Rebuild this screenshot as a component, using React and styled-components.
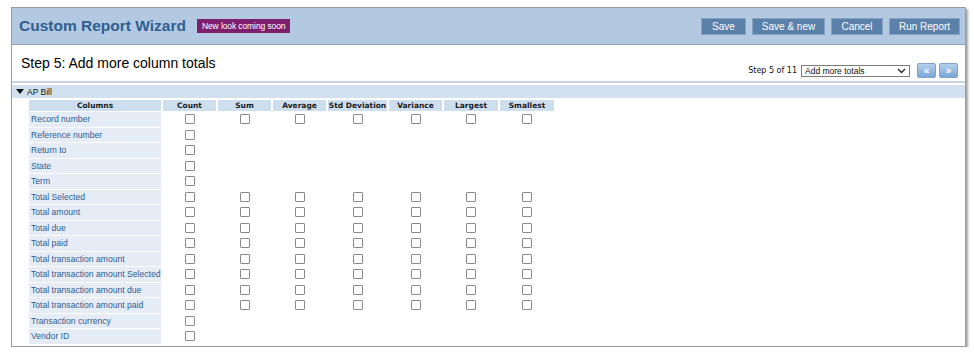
import React from 'react'
import styled, { createGlobalStyle } from 'styled-components'

const GlobalStyle = createGlobalStyle`
body{
    margin:0;
    background:#fff;
    font-family:"Liberation Sans", Arial, sans-serif;
}
`

const totals = ['Count', 'Sum', 'Average', 'Std Deviation', 'Variance', 'Largest', 'Smallest']

const rows = [
    { name: 'Record number', all: true },
    { name: 'Reference number', all: false },
    { name: 'Return to', all: false },
    { name: 'State', all: false },
    { name: 'Term', all: false },
    { name: 'Total Selected', all: true },
    { name: 'Total amount', all: true },
    { name: 'Total due', all: true },
    { name: 'Total paid', all: true },
    { name: 'Total transaction amount', all: true },
    { name: 'Total transaction amount Selected', all: true },
    { name: 'Total transaction amount due', all: true },
    { name: 'Total transaction amount paid', all: true },
    { name: 'Transaction currency', all: false },
    { name: 'Vendor ID', all: false },
]

const App = () => {
    return (
        <Page>
            <GlobalStyle />
            <Frame>
                <Header>
                    <Title>Custom Report Wizard</Title>
                    <Badge>New look coming soon</Badge>
                    <Actions>
                        <HeaderButton $w={45}>Save</HeaderButton>
                        <HeaderButton $w={73}>Save &amp; new</HeaderButton>
                        <HeaderButton $w={52}>Cancel</HeaderButton>
                        <HeaderButton $w={71}>Run Report</HeaderButton>
                    </Actions>
                </Header>
                <StepBar>
                    <StepTitle>Step 5: Add more column totals</StepTitle>
                    <StepNav>
                        <StepCount>Step 5 of 11</StepCount>
                        <SelectBox>
                            <span>Add more totals</span>
                            <svg width="9" height="6" viewBox="0 0 9 6">
                                <path d="M1 1 L4.5 4.5 L8 1" fill="none" stroke="#222" strokeWidth="1.3" />
                            </svg>
                        </SelectBox>
                        <NavButton>«</NavButton>
                        <NavButton>»</NavButton>
                    </StepNav>
                </StepBar>
                <SectionBar>
                    <svg width="8" height="6" viewBox="0 0 8 6">
                        <path d="M0 0 L8 0 L4 5 Z" fill="#111" />
                    </svg>
                    AP Bill
                </SectionBar>
                <Grid>
                    <HeadCell>Columns</HeadCell>
                    {totals.map((t) => <HeadCell key={t}>{t}</HeadCell>)}
                    {rows.map((r) => (
                        <React.Fragment key={r.name}>
                            <LabelCell>{r.name}</LabelCell>
                            {totals.map((t, i) => (
                                <BoxCell key={t}>
                                    {(r.all || i === 0) && <Check type="checkbox" />}
                                </BoxCell>
                            ))}
                        </React.Fragment>
                    ))}
                </Grid>
            </Frame>
        </Page>
    )
}

export default App

const Page = styled.div`
padding:7px 0 0 11px;`

const Frame = styled.div`
width:953px;
height:338px;
border:1px solid #9a9a9a;
background:#fff;
box-shadow:2px 2px 2px rgba(0,0,0,.35);
overflow:hidden;`

const Header = styled.div`
height:36px;
display:flex;
align-items:center;
padding:0 5px 0 7px;
background:#b3c8e1;
border-bottom:1px solid #8ea4bf;`

const Title = styled.h1`
margin:0;
font-size:15.5px;
font-weight:700;
color:#2f5f92;`

const Badge = styled.div`
margin-left:11px;
height:14px;
padding:0 5px;
display:flex;
align-items:center;
background:#7e1f6e;
color:#fff;
font-size:8.5px;
letter-spacing:-0.1px;`

const Actions = styled.div`
margin-left:auto;
display:flex;
gap:6px;`

const HeaderButton = styled.div`
width:${(p) => p.$w}px;
height:17px;
box-sizing:border-box;
display:flex;
align-items:center;
justify-content:center;
background:#5b80aa;
border:1px solid #86a3c3;
color:#fff;
font-size:10px;`

const StepBar = styled.div`
height:36px;
display:flex;
align-items:center;
padding:0 7px 0 9px;
border-bottom:2px solid #c7d4e3;`

const StepTitle = styled.h2`
margin:0;
font-size:14px;
font-weight:400;
color:#000;`

const StepNav = styled.div`
margin-left:auto;
margin-top:15px;
display:flex;
align-items:center;`

const StepCount = styled.span`
font-family:"DejaVu Sans", Verdana, sans-serif;
font-size:8px;
color:#111;
margin-right:4px;`

const SelectBox = styled.div`
width:109px;
height:12px;
box-sizing:border-box;
display:flex;
align-items:center;
justify-content:space-between;
padding:0 3px 0 3px;
border:1px solid #7c7c7c;
font-size:8.5px;
color:#111;
margin-right:4px;`

const NavButton = styled.div`
width:19px;
height:15px;
box-sizing:border-box;
display:flex;
align-items:center;
justify-content:center;
margin-left:3px;
border:1px solid #7ca2cd;
border-radius:2px;
background:linear-gradient(#b5cfec, #7aa6d6);
color:#fff;
font-size:10px;
font-weight:700;
&:first-of-type{margin-left:0;}`

const SectionBar = styled.div`
margin-top:2px;
height:13px;
display:flex;
align-items:center;
gap:3px;
padding-left:4px;
background:#d2e0f0;
font-size:8.5px;
color:#111;`

const Grid = styled.div`
display:grid;
grid-template-columns:132px 53px 53px 53px 59px 53px 54px 54px;
grid-template-rows:11px;
grid-auto-rows:14.5px;
column-gap:2px;
row-gap:1px;
margin:2px 0 0 17px;`

const HeadCell = styled.div`
background:#cddeef;
display:flex;
align-items:center;
justify-content:center;
font-family:"DejaVu Sans", Verdana, sans-serif;
font-weight:700;
font-size:7.5px;
color:#1a1a1a;
white-space:nowrap;`

const LabelCell = styled.div`
background:#e5ecf5;
display:flex;
align-items:center;
padding-left:2px;
font-size:8.6px;
color:#2d5d95;
white-space:nowrap;`

const BoxCell = styled.div`
display:flex;
align-items:center;
justify-content:center;`

const Check = styled.input`
appearance:none;
margin:0;
width:10px;
height:10px;
border:1px solid #8a8a8a;
border-radius:1px;
background:#fff;`
